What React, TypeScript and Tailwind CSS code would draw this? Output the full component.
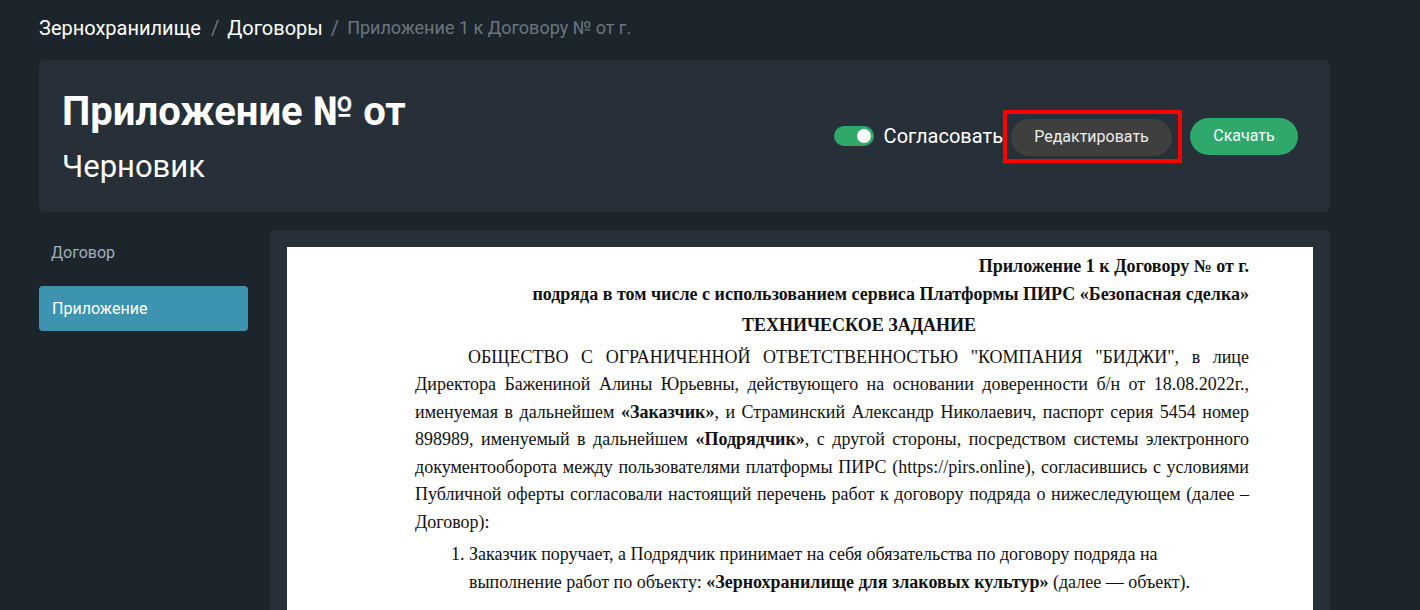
import React from "react";

export default function App() {
  return (
    <div
      className="min-h-[610px] h-[610px] overflow-hidden bg-[#1d252c] pl-[39px] pr-[90px] pt-[14px]"
      style={{ fontFamily: "Roboto, 'Noto Sans', sans-serif" }}
    >
      {/* Breadcrumb */}
      <div className="flex items-center h-[28px] text-[20px] leading-[28px]">
        <span className="text-white">Зернохранилище</span>
        <span className="text-[#6b7580] ml-[10px] mr-[8px]">/</span>
        <span className="text-white">Договоры</span>
        <span className="text-[#6b7580] mx-[8px]">/</span>
        <span className="text-[#6b7580] text-[18px]">Приложение 1 к Договору № от г.</span>
      </div>

      {/* Header card */}
      <div className="mt-[18px] h-[152px] rounded-[6px] bg-[#272f38] pl-[23px] pr-[32px] flex items-center justify-between">
        <div className="flex flex-col">
          <div className="text-[40px] leading-[48px] font-bold text-white">Приложение № от</div>
          <div className="mt-[13px] text-[31px] leading-[36px] font-normal text-white">Черновик</div>
        </div>
        <div className="flex items-center">
          <div className="flex items-center">
            <div className="w-[40px] h-[20px] rounded-full bg-[#2fa86a] flex items-center justify-end pr-[3px]">
              <div className="w-[14px] h-[14px] rounded-full bg-white" />
            </div>
            <span className="ml-[10px] text-[20px] leading-[24px] text-white">Согласовать</span>
          </div>
          <div className="border-4 border-[#ff0000] pl-[4px] pr-[6px] pt-[5px] pb-[3px]">
            <button className="w-[161px] h-[37px] rounded-full bg-[#3f3f3f] text-[16px] text-[#ececec]">
              Редактировать
            </button>
          </div>
          <button className="ml-[8px] w-[108px] h-[37px] rounded-full bg-[#2ea86b] text-[16px] text-white">
            Скачать
          </button>
        </div>
      </div>

      {/* Body */}
      <div className="mt-[18px] flex gap-[22px]">
        <div className="w-[209px] shrink-0 flex flex-col">
          <div className="h-[45px] flex items-center pl-[12px] text-[16px] text-[#a3adb8]">Договор</div>
          <div className="mt-[11px] h-[45px] rounded-[4px] bg-[#3c94b0] flex items-center pl-[13px] text-[16px] text-white">
            Приложение
          </div>
        </div>
        <div className="flex-1 rounded-t-[6px] bg-[#272f38] pt-[17px] px-[17px] h-[400px]">
          <div
            className="bg-white h-full pt-[6px] pl-[128px] pr-[64px] text-[18px] leading-[27.5px] text-[#111]"
            style={{ fontFamily: "'Liberation Serif', 'Times New Roman', serif" }}
          >
            <p className="text-right font-bold">Приложение 1 к Договору № от г.</p>
            <p className="text-right font-bold">
              подряда в том числе с использованием сервиса Платформы ПИРС «Безопасная сделка»
            </p>
            <p className="mt-[4px] text-center font-bold pl-[54px]">ТЕХНИЧЕСКОЕ ЗАДАНИЕ</p>
            <p className="mt-[4px] text-justify indent-[53px]">
              ОБЩЕСТВО С ОГРАНИЧЕННОЙ ОТВЕТСТВЕННОСТЬЮ "КОМПАНИЯ "БИДЖИ", в лице Директора Бажениной Алины
              Юрьевны, действующего на основании доверенности б/н от 18.08.2022г., именуемая в дальнейшем{" "}
              <b>«Заказчик»</b>, и Страминский Александр Николаевич, паспорт серия 5454 номер 898989, именуемый в
              дальнейшем <b>«Подрядчик»</b>, с другой стороны, посредством системы электронного документооборота
              между пользователями платформы ПИРС (https://pirs.online), согласившись с условиями Публичной оферты
              согласовали настоящий перечень работ к договору подряда о нижеследующем (далее – Договор):
            </p>
            <ol className="mt-[5px] list-decimal pl-[54px] pr-[49px]">
              <li>
                Заказчик поручает, а Подрядчик принимает на себя обязательства по договору подряда на выполнение
                работ по объекту: <b>«Зернохранилище для злаковых культур»</b> (далее — объект).
              </li>
            </ol>
          </div>
        </div>
      </div>
    </div>
  );
}
